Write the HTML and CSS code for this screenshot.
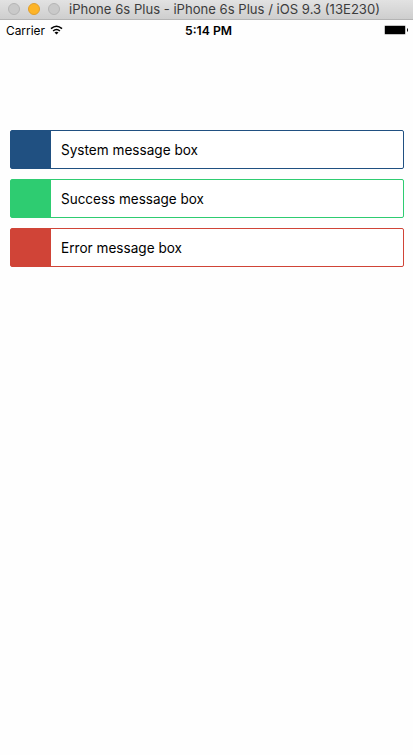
FILE: index.html
```
<!DOCTYPE html>
<html lang="en">
<head>
<meta charset="utf-8">
<title>iPhone 6s Plus</title>
<link rel="stylesheet" href="styles.css">
</head>
<body>
<header class="titlebar">
  <span class="light"></span>
  <span class="light light-minimize"></span>
  <span class="light"></span>
  <svg class="title" width="320" height="18"><text x="0" y="14" textLength="311" lengthAdjust="spacingAndGlyphs">iPhone 6s Plus - iPhone 6s Plus / iOS 9.3 (13E230)</text></svg>
</header>
<div class="statusbar">
  <div class="carrier">
    <svg width="42" height="18"><text x="0" y="13" textLength="39" lengthAdjust="spacingAndGlyphs">Carrier</text></svg>
    <svg class="wifi" width="13" height="10" viewBox="0 0 13 10">
      <path d="M1 3.7Q6.5-1.2 12 3.7M3.1 6Q6.5 3 9.9 6" fill="none" stroke="#000" stroke-width="1.6"/>
      <path d="M4.5 7.4Q6.5 5.9 8.5 7.4L6.5 9.5Z"/>
    </svg>
  </div>
  <svg class="time" width="48" height="18"><text x="0" y="13" textLength="47" lengthAdjust="spacingAndGlyphs">5:14 PM</text></svg>
  <svg class="battery" width="25" height="10" viewBox="0 0 25 10">
    <rect x=".5" y=".5" width="21" height="9" rx="1" fill="none" stroke="#aaa" stroke-width=".7"/>
    <path d="M1 1H21V9H1ZM23 3.5h.9v3H23Z"/>
  </svg>
</div>
<main class="messages">
  <div class="message system"><span class="swatch"></span><svg class="label" width="180" height="20"><text x="0" y="14.5" textLength="137" lengthAdjust="spacingAndGlyphs">System message box</text></svg></div>
  <div class="message success"><span class="swatch"></span><svg class="label" width="180" height="20"><text x="0" y="14.5" textLength="143" lengthAdjust="spacingAndGlyphs">Success message box</text></svg></div>
  <div class="message error"><span class="swatch"></span><svg class="label" width="180" height="20"><text x="0" y="14.5" textLength="121" lengthAdjust="spacingAndGlyphs">Error message box</text></svg></div>
</main>
</body>
</html>
```
FILE: styles.css
```
* { box-sizing: border-box; }
body {
  margin: 0;
  height: 755px;
  overflow: hidden;
  background: #fefefe;
  color: #000;
  font-family: Inter, "Liberation Sans", sans-serif;
}
svg { display: block; flex: none; }
.titlebar {
  display: flex;
  align-items: center;
  gap: 8px;
  height: 20px;
  padding: 0 0 1px 8px;
  background: linear-gradient(#e2e2e2, #cecece);
  border-bottom: 1px solid #b4b4b4;
}
.light {
  flex: none;
  width: 12px;
  height: 12px;
  border: 1px solid #b5b5b5;
  border-radius: 50%;
  background: #c9c9c9;
}
.light-minimize { border-color: #e09e2b; background: #fdb427; }
.title { margin-left: 1px; font-size: 13px; fill: #3c3c3c; }
.statusbar {
  display: grid;
  grid-template-columns: 1fr 48px 1fr;
  align-items: center;
  height: 20px;
  padding: 2px 4px 0 6px;
  font-size: 12px;
}
.carrier { display: flex; align-items: center; gap: 2px; }
.wifi { margin-bottom: 2px; }
.time { font-weight: 600; margin-left: 1px; }
.battery { justify-self: end; margin-bottom: 2px; }
.messages {
  display: flex;
  flex-direction: column;
  gap: 10px;
  padding: 90px 9px 0 10px;
}
.message {
  display: flex;
  align-items: center;
  height: 39px;
  border: 1px solid var(--tone);
  border-radius: 2px;
  background: #fff;
}
.system { --tone: #205081; }
.success { --tone: #2ecc71; }
.error { --tone: #d04437; }
.swatch { align-self: stretch; width: 40px; background: var(--tone); }
.label { margin-left: 10px; font-size: 14px; }
```
